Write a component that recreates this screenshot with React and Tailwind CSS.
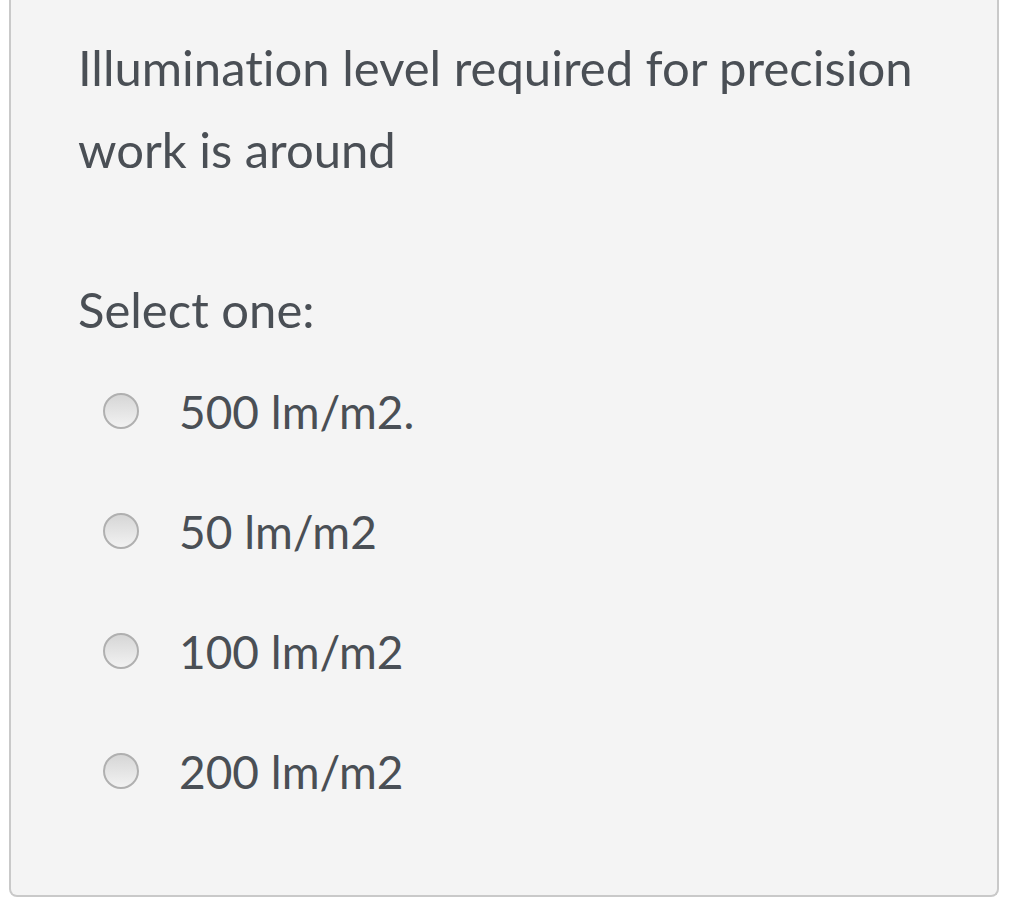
import React from 'react';

const options = ['500 lm/m2.', '50 lm/m2', '100 lm/m2', '200 lm/m2'];

function Radio() {
  return (
    <span className="block w-9 h-9 rounded-full border-2 border-[#b0b0b0] bg-gradient-to-b from-[#d6d6d6] to-[#f2f2f2] shrink-0" />
  );
}

export default function App() {
  return (
    <div className="min-h-screen bg-white pl-[9px] pr-[20px] font-['Lato','Liberation_Sans',sans-serif] text-[#4a4f55] [font-variant-ligatures:none]">
      <div className="h-[897px] bg-[#f4f4f4] border-x-2 border-b-2 border-[#c9c9c9] rounded-b-lg pl-[67px] pr-6 pt-[26px]">
        <p className="text-[49px] leading-[82px]">
          Illumination level required for precision work is around
        </p>
        <p className="mt-[78px] text-[49px] leading-[82px]">Select one:</p>
        <div className="mt-[21px] flex flex-col gap-[40px] pl-[25px]">
          {options.map((o) => (
            <label key={o} className="flex items-center gap-[40px] h-[80px]">
              <Radio />
              <span className="text-[46px]">{o}</span>
            </label>
          ))}
        </div>
      </div>
    </div>
  );
}
